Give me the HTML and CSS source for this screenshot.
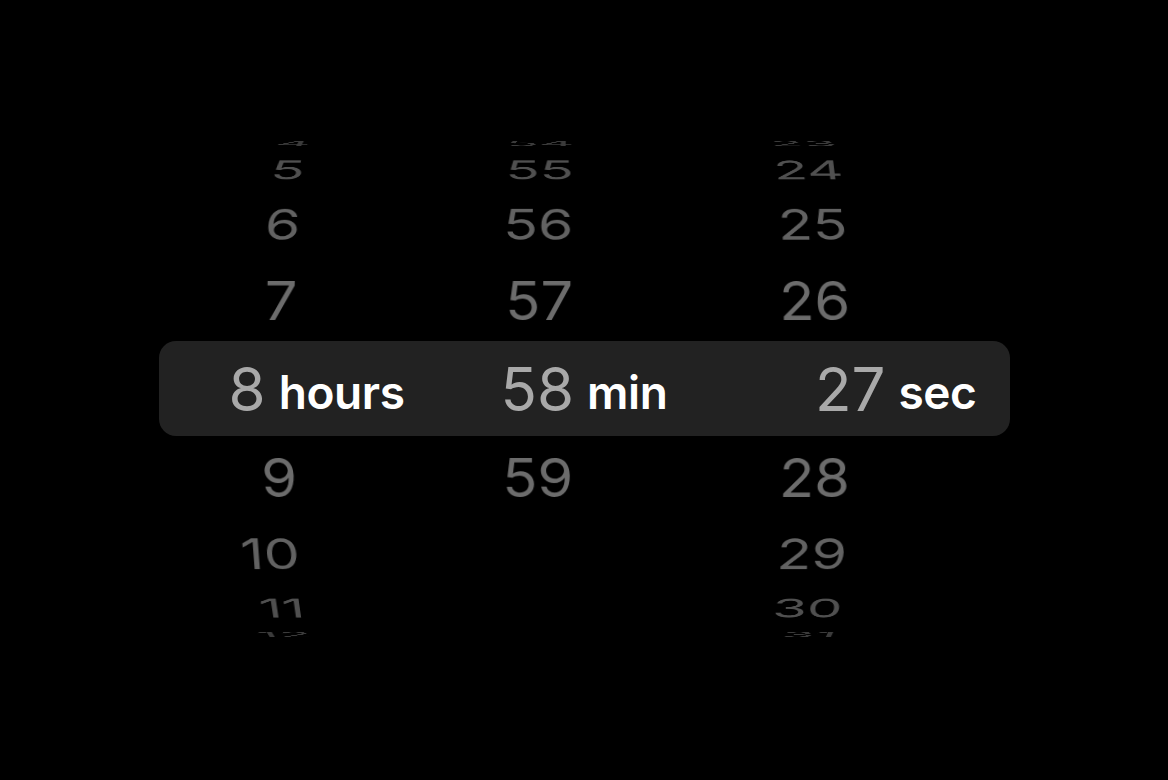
FILE: index.html
```html
<!DOCTYPE html>
<html lang="en">
<head>
  <meta charset="UTF-8">
  <meta name="viewport" content="width=device-width, initial-scale=1.0">
  <title>Timer</title>
  <link rel="stylesheet" href="styles.css">
</head>
<body>
  <div class="picker" id="picker">
    <div class="band">
      <div class="selected sel-h"><span class="num">8</span><span class="unit">hours</span></div>
      <div class="selected sel-m"><span class="num">58</span><span class="unit">min</span></div>
      <div class="selected sel-s"><span class="num">27</span><span class="unit">sec</span></div>
    </div>
    <div class="wheel wheel-h" data-value="8" data-max="23"></div>
    <div class="wheel wheel-m" data-value="58" data-max="59"></div>
    <div class="wheel wheel-s" data-value="27" data-max="59"></div>
  </div>

  <script>
    // fade for rows 1..4 away from the selected one
    const fades = [1, 0.95, 0.86, 0.7, 0.52];

    document.querySelectorAll(".wheel").forEach((wheel) => {
      const value = Number(wheel.dataset.value);
      const max = Number(wheel.dataset.max);

      for (let k = -4; k <= 4; k++) {
        const n = value + k;
        if (k === 0 || n < 0 || n > max) continue;

        const item = document.createElement("div");
        item.className = "wheel-item";
        item.textContent = n;
        item.style.setProperty("--k", k);
        item.style.opacity = fades[Math.abs(k)];
        wheel.appendChild(item);
      }
    });
  </script>
</body>
</html>
```

FILE: styles.css
```css
body {
  margin: 0;
  height: 100vh;
  box-sizing: border-box;
  padding-bottom: 3px;
  background-color: #000;
  display: flex;
  align-items: center;
  justify-content: center;
  font-family: Inter, "Liberation Sans", sans-serif;
}
.picker {
  width: 851px;
  height: 500px;
  display: grid;
  grid-template-columns: 137px 278px 278px 1fr;
  grid-template-rows: 500px;
  perspective: 3700px;
}
.band {
  grid-column: 1 / -1;
  grid-row: 1;
  align-self: center;
  height: 95px;
  background-color: #222;
  border-radius: 17px;
  display: grid;
  grid-template-columns: 246px 270px 1fr;
  align-items: center;
}
.selected {
  white-space: nowrap;
  line-height: 1;
}
.sel-h {
  justify-self: end;
}
.sel-m {
  justify-self: start;
  margin-left: 96px;
}
.sel-s {
  justify-self: end;
  margin-right: 33px;
}
.num {
  font-size: 60px;
  font-weight: 400;
  color: #a9a9a9;
}
.unit {
  font-size: 46px;
  font-weight: 600;
  color: #fff;
  margin-left: 13px;
  letter-spacing: -0.4px;
  vertical-align: 2px;
}
.wheel {
  grid-row: 1;
  display: grid;
  transform-style: preserve-3d;
}
.wheel-h {
  grid-column: 1;
}
.wheel-m {
  grid-column: 2;
}
.wheel-s {
  grid-column: 3;
}
.wheel-item {
  grid-area: 1 / 1;
  align-self: center;
  justify-self: end;
  font-size: 58px;
  line-height: 1;
  color: #727272;
  transform: translateZ(-265px) rotateX(calc(var(--k) * -19.6deg)) translateZ(265px);
}
```
